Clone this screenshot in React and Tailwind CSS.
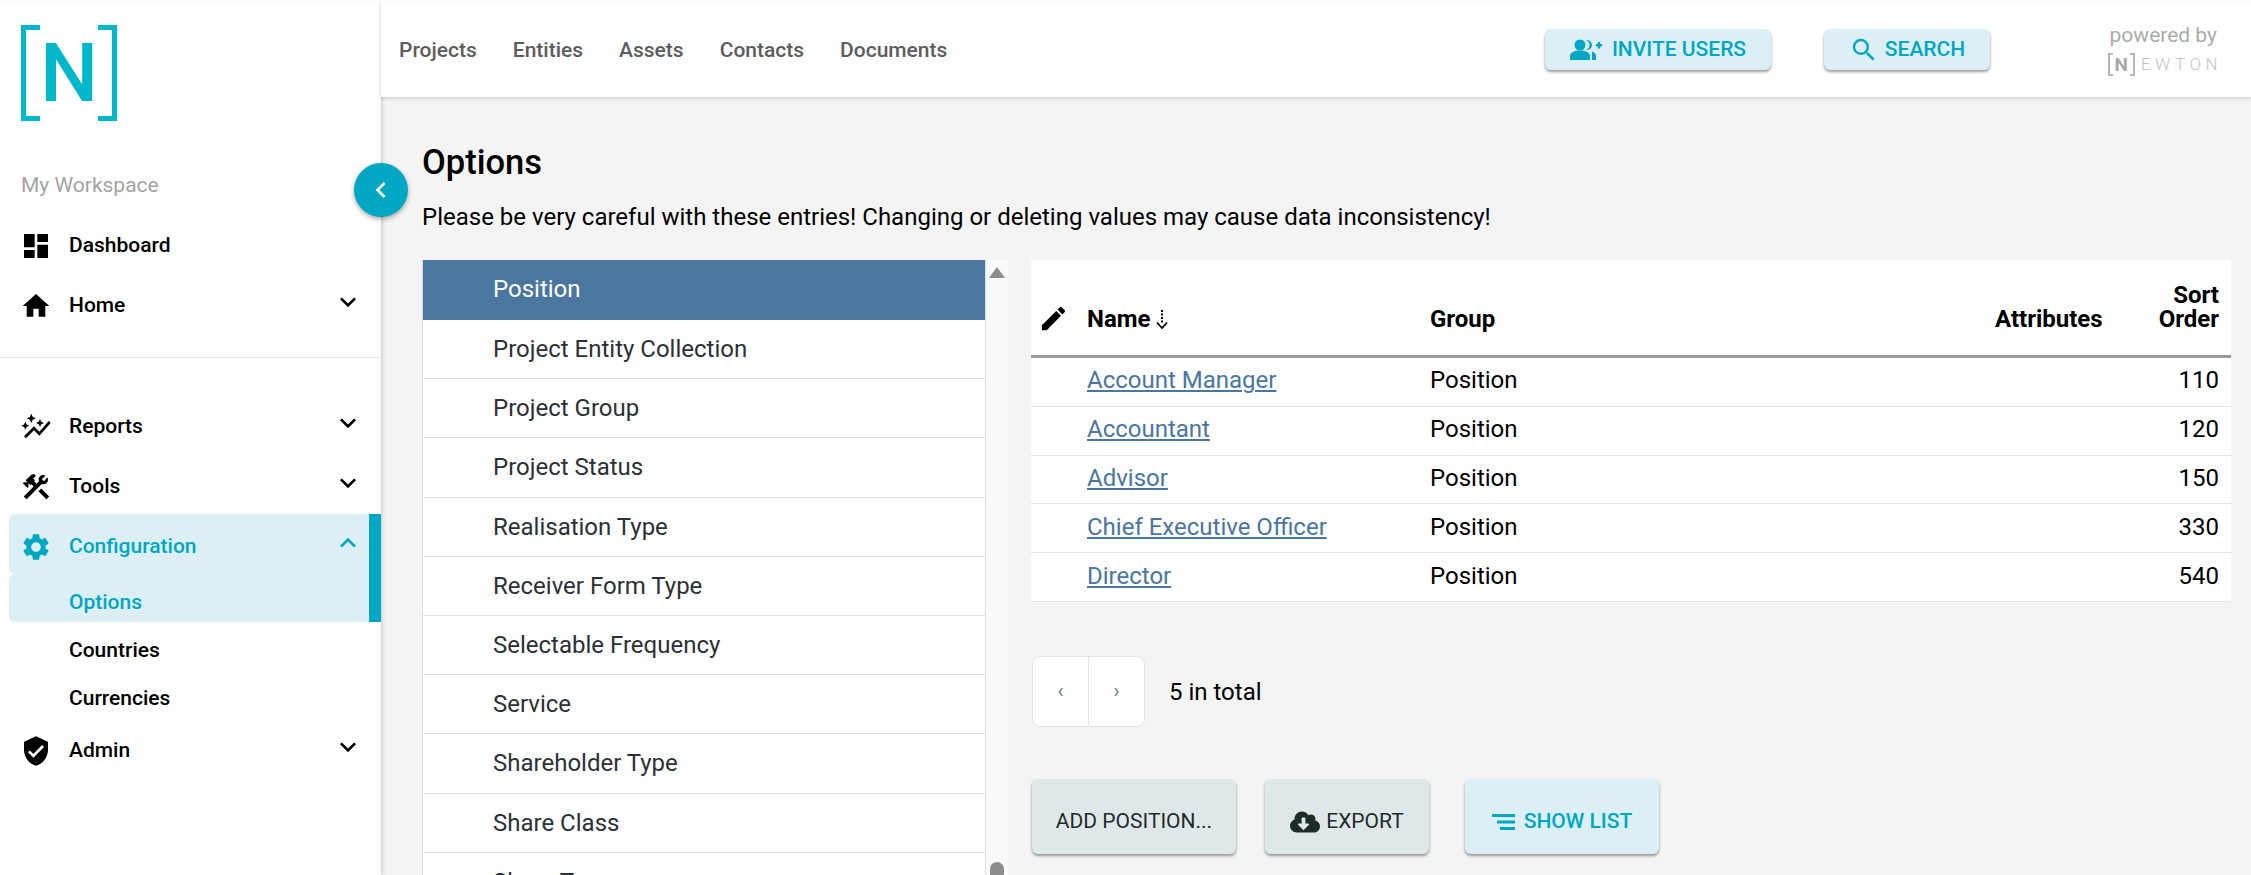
import React from "react";
import {
  MdDashboard,
  MdHome,
  MdAutoGraph,
  MdConstruction,
  MdSettings,
  MdVerifiedUser,
  MdKeyboardArrowDown,
  MdKeyboardArrowUp,
  MdKeyboardArrowLeft,
  MdEdit,
  MdSearch,
} from "react-icons/md";
import { FaCloudDownloadAlt } from "react-icons/fa";

const topLinks = ["Projects", "Entities", "Assets", "Contacts", "Documents"];

const optionTypes = [
  "Project Entity Collection",
  "Project Group",
  "Project Status",
  "Realisation Type",
  "Receiver Form Type",
  "Selectable Frequency",
  "Service",
  "Shareholder Type",
  "Share Class",
  "Share Type",
];

const rows = [
  { name: "Account Manager", order: 110 },
  { name: "Accountant", order: 120 },
  { name: "Advisor", order: 150 },
  { name: "Chief Executive Officer", order: 330 },
  { name: "Director", order: 540 },
];

function Logo() {
  return (
    <div className="flex h-[96px] w-[96px] items-center justify-between text-[#00b8c9]">
      <div className="h-full w-[21px] border-[5px] border-r-0 border-[#00b8c9]" />
      <span className="text-[82px] font-medium leading-none">N</span>
      <div className="h-full w-[21px] border-[5px] border-l-0 border-[#00b8c9]" />
    </div>
  );
}

function NavItem({ icon: Icon, label, chevron = true, offset = "pt-[6px]" }) {
  return (
    <div className={`flex h-[60px] items-center pl-[11px] pr-[5px] text-[21px] font-medium text-black ${offset}`}>
      <Icon size={32} />
      <span className="ml-[17px]">{label}</span>
      {chevron && <MdKeyboardArrowDown size={32} className="ml-auto -mt-[8px]" />}
    </div>
  );
}

function InviteIcon() {
  return (
    <svg width="32" height="22" viewBox="0 0 32 22" fill="currentColor">
      <circle cx="10" cy="6" r="5.5" />
      <path d="M0 21v-4c0-3.5 4.5-5.5 10-5.5s10 2 10 5.5v4z" />
      <path d="M16 1c2.5 1 3.5 3 3.5 5s-1 4-3.5 5c3.5 0 6-2 6-5s-2.500-5-6-5z" />
      <path d="M22 12.500c2.500 1 4 2.500 4 4.500v4h-4z" />
      <rect x="26" y="5" width="6" height="2.500" />
      <rect x="27.750" y="3" width="2.500" height="6.500" />
    </svg>
  );
}

function SortIcon() {
  return (
    <svg width="12" height="19" viewBox="0 0 12 19" className="ml-[5px]">
      <path d="M6 0v13" stroke="currentColor" strokeWidth="2" strokeDasharray="2 1.500" />
      <path d="M1 12.500l5 5.500 5-5.500" fill="none" stroke="currentColor" strokeWidth="1.800" />
    </svg>
  );
}

function ListIcon() {
  return (
    <svg width="23" height="16" viewBox="0 0 23 16" fill="currentColor" className="mr-[9px]">
      <rect width="23" height="3" />
      <rect x="5" y="6.500" width="18" height="3" />
      <rect x="8" y="13" width="15" height="3" />
    </svg>
  );
}

function ActionButton({ className, children }) {
  return (
    <button
      className={`flex items-center justify-center rounded-md shadow-[0_2px_3px_rgba(0,0,0,0.4)] ${className}`}
    >
      {children}
    </button>
  );
}

function Sidebar() {
  return (
    <aside className="relative z-10 flex w-[381px] shrink-0 flex-col bg-white shadow-[1px_0_4px_rgba(0,0,0,0.2)]">
      <div className="pl-[21px] pt-6">
        <Logo />
      </div>
      <p className="mt-[50px] pl-[21px] text-[21px] leading-7 text-[#a3a3a3]">My Workspace</p>
      <nav className="mt-[15px] pl-[9px] pr-[12px]">
        <NavItem icon={MdDashboard} label="Dashboard" chevron={false} offset="pt-1" />
        <NavItem icon={MdHome} label="Home" offset="pt-1" />
        <div className="mt-[23px] -ml-[9px] mb-[36px] -mr-[12px] border-t border-[#e8e8e8]" />
        <NavItem icon={MdAutoGraph} label="Reports" />
        <NavItem icon={MdConstruction} label="Tools" />
        <div className="-mr-[12px] border-r-[12px] border-[#00a7c2]">
          <div className="flex h-[60px] items-center rounded-l-md bg-[#dceff4] pl-[11px] pr-[5px] pt-[6px] text-[21px] font-medium text-[#00a7c2]">
            <MdSettings size={32} />
            <span className="ml-[17px]">Configuration</span>
            <MdKeyboardArrowUp size={32} className="ml-auto -mt-[8px]" />
          </div>
          <div className="flex h-[48px] items-center rounded-l-md bg-[#dceff4] pl-[60px] pt-[10px] text-[21px] font-medium text-[#00a7c2]">
            Options
          </div>
        </div>
        <div className="flex h-[48px] items-center pl-[60px] pt-[10px] text-[21px] font-medium text-black">
          Countries
        </div>
        <div className="flex h-[48px] items-center pl-[60px] pt-[10px] text-[21px] font-medium text-black">
          Currencies
        </div>
        <NavItem icon={MdVerifiedUser} label="Admin" />
      </nav>
    </aside>
  );
}

function TopBar() {
  return (
    <header className="relative z-20 flex h-[96px] shrink-0 items-center bg-white pl-[18px] pr-[34px] shadow-[0_1px_4px_rgba(0,0,0,0.2)]">
      <nav className="flex gap-[36px] pt-1 text-[21px] font-medium text-[#5c5c5c]">
        {topLinks.map((link) => (
          <a key={link}>{link}</a>
        ))}
      </nav>
      <ActionButton className="ml-auto h-[41px] w-[226px] gap-[10px] bg-[#dceff4] pt-[2px] text-[21px] font-medium text-[#00a7c2]">
        <InviteIcon />
        INVITE USERS
      </ActionButton>
      <ActionButton className="ml-[53px] h-[41px] w-[166px] gap-[6px] bg-[#dceff4] pt-[2px] text-[21px] font-medium text-[#00a7c2]">
        <MdSearch size={30} />
        SEARCH
      </ActionButton>
      <div className="ml-[120px] flex w-[107px] flex-col items-end text-[#ababab]">
        <span className="whitespace-nowrap text-[21px] leading-6">powered by</span>
        <div className="mt-[6px] -mr-[5px] flex items-center">
          <div className="h-[23px] w-[5px] border-2 border-r-0 border-[#b5b5b5]" />
          <span className="px-[2px] text-[19px] font-bold leading-[23px] text-[#a8a8a8]">N</span>
          <div className="h-[23px] w-[5px] border-2 border-l-0 border-[#b5b5b5]" />
          <span className="ml-[6px] text-[17px] font-light leading-[22px] tracking-[4.500px] text-[#c4c4c4]">EWTON</span>
        </div>
      </div>
    </header>
  );
}

function OptionList() {
  return (
    <div className="flex w-[586px] shrink-0">
      <ul className="flex-1 overflow-hidden border-x border-[#dedede] bg-white text-[24px] text-[#2b3036]">
        <li className="flex h-[60px] items-center bg-[#4a76a0] pb-[2px] pl-[70px] text-white">Position</li>
        {optionTypes.map((type) => (
          <li key={type} className="flex h-[59.200px] items-center border-b border-[#e0e0e0] pl-[70px]">
            {type}
          </li>
        ))}
      </ul>
      <div className="flex w-[22px] flex-col items-center overflow-hidden bg-[#fafafa] pt-[7px]">
        <div className="h-0 w-0 border-x-[8px] border-b-[11px] border-x-transparent border-b-[#8c8c8c]" />
        <div className="mt-auto h-[13px] w-[14px] rounded-t-full bg-[#8c8c8c]" />
      </div>
    </div>
  );
}

function OptionTable() {
  const cols = "grid grid-cols-[56px_343px_1fr_118px_118px]";
  return (
    <div className="bg-white text-[24px] text-black">
      <div className={`${cols} h-[98px] items-end border-b-[3px] border-[#999999] pb-[24px] font-bold leading-[24px]`}>
        <MdEdit size={31} className="ml-[7px] mb-[-3px]" />
        <div className="flex items-center pr-3">
          Name
          <SortIcon />
        </div>
        <div>Group</div>
        <div className="pr-[13px] text-right">Attributes</div>
        <div className="pr-3 text-right">
          Sort
          <br />
          Order
        </div>
      </div>
      {rows.map((row) => (
        <div key={row.name} className={`${cols} h-[48.800px] items-center border-b border-[#e3e3e3] pb-[3px]`}>
          <div />
          <a className="text-[#4a76a0] underline">{row.name}</a>
          <div>Position</div>
          <div />
          <div className="pr-3 text-right">{row.order}</div>
        </div>
      ))}
    </div>
  );
}

export default function App() {
  return (
    <div className="flex h-[875px] overflow-hidden border-t border-[#fafaf2] bg-[#f4f4f4] font-['Roboto',sans-serif]">
      <Sidebar />
      <div className="flex min-w-0 flex-1 flex-col">
        <TopBar />
        <main className="flex min-h-0 flex-1 flex-col pl-[41px] pr-5">
          <h1 className="mt-[46px] text-[34.500px] font-medium leading-[38px] text-black">Options</h1>
          <p className="mt-[22px] text-[24px] leading-7 text-black">
            Please be very careful with these entries! Changing or deleting values may cause data inconsistency!
          </p>
          <div className="mt-[29px] flex min-h-0 flex-1 gap-[23px]">
            <OptionList />
            <div className="flex-1">
              <OptionTable />
              <div className="ml-px mt-[54px] flex items-center">
                <div className="flex h-[71px] w-[113px] rounded-lg border border-[#e0e3e8] bg-white text-[20px] text-[#6b7a90]">
                  <span className="flex flex-1 items-center justify-center border-r border-[#e0e3e8]">‹</span>
                  <span className="flex flex-1 items-center justify-center">›</span>
                </div>
                <span className="ml-[24px] pt-[2px] text-[24px] text-black">5 in total</span>
              </div>
              <div className="ml-px mt-[52px] flex">
                <ActionButton className="h-[75px] w-[204px] bg-[#dfe8e8] pt-[11px] text-[21px] text-[#1f2a2a]">
                  ADD POSITION...
                </ActionButton>
                <ActionButton className="ml-[29px] h-[75px] w-[164px] gap-[6px] bg-[#dfe8e8] pt-[11px] text-[21px] text-[#1f2a2a]">
                  <FaCloudDownloadAlt size={30} />
                  EXPORT
                </ActionButton>
                <ActionButton className="ml-[36px] h-[75px] w-[194px] bg-[#dceff4] pt-[11px] text-[21px] font-medium text-[#00a7c2]">
                  <ListIcon />
                  SHOW LIST
                </ActionButton>
              </div>
            </div>
          </div>
        </main>
      </div>
      <button className="absolute left-[354px] top-[163px] z-30 flex h-[54px] w-[54px] items-center justify-center rounded-full bg-[#00a7c2] text-white shadow-[0_2px_5px_rgba(0,0,0,0.35)]">
        <MdKeyboardArrowLeft size={32} />
      </button>
    </div>
  );
}
